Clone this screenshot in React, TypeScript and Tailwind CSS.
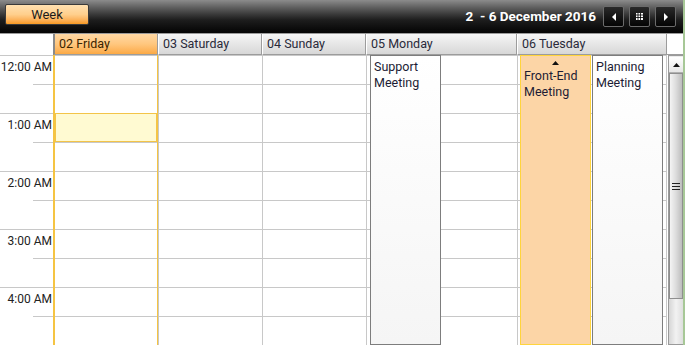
import { clsx } from 'clsx';

const HOURS = ['12:00 AM', '1:00 AM', '2:00 AM', '3:00 AM', '4:00 AM'];
const ROWS = Array.from({ length: 10 }, (_, i) => i);

type Day = { label: string; width: string; today?: boolean };

const DAYS: Day[] = [
  { label: '02 Friday', width: 'w-[105px]', today: true },
  { label: '03 Saturday', width: 'w-[104px]' },
  { label: '04 Sunday', width: 'w-[104px]' },
  { label: '05 Monday', width: 'w-[151px]' },
  { label: '06 Tuesday', width: 'w-[150px]' },
];

function NavButton({ children }: { children: React.ReactNode }) {
  return (
    <button className="w-[21px] h-[21px] flex items-center justify-center rounded-[2px] border border-[#6b6b6b] bg-gradient-to-b from-[#2a2a2a] to-[#050505]">
      {children}
    </button>
  );
}

function Toolbar() {
  return (
    <div className="h-[34px] shrink-0 flex items-center pl-[5px] pr-[7px] bg-gradient-to-b from-[#8c8c8c] via-[#1e1e1e] via-60% to-[#050505] border-b border-[#9a9a9a]">
      <button className="w-[84px] h-[21px] mt-[-4px] border border-[#3a3a3a] rounded-[2px] bg-gradient-to-b from-[#ffe0b0] via-[#ffcf8c] via-50% to-[#f89a20] text-[13px] text-[#1b1b1b] leading-none">
        Week
      </button>
      <div className="flex-1" />
      <span className="text-white font-bold text-[13.5px] mr-[7px] whitespace-pre">
        2  - 6 December 2016
      </span>
      <div className="flex gap-[5px]">
        <NavButton>
          <svg width="6" height="8" viewBox="0 0 6 8">
            <path d="M5 0 L1 4 L5 8 Z" fill="#fff" />
          </svg>
        </NavButton>
        <NavButton>
          <svg width="7" height="7" viewBox="0 0 7 7" fill="#fff">
            <rect x="0" y="0" width="7" height="7" />
            <path d="M2 0 V7 M4.5 0 V7 M0 2 H7 M0 4.5 H7" stroke="#000" strokeWidth="0.8" />
          </svg>
        </NavButton>
        <NavButton>
          <svg width="6" height="8" viewBox="0 0 6 8">
            <path d="M1 0 L5 4 L1 8 Z" fill="#fff" />
          </svg>
        </NavButton>
      </div>
    </div>
  );
}

function HeaderRow() {
  return (
    <div className="h-[21px] shrink-0 flex bg-white">
      <div className="w-[53px] shrink-0" />
      {DAYS.map((d) => (
        <div
          key={d.label}
          className={clsx(
            d.width,
            'shrink-0 flex items-center pl-[4px] pt-[1px] text-[12.5px] border-r border-b border-[#9c9c9c] whitespace-nowrap',
            d.today
              ? 'bg-gradient-to-b from-[#ffd8a4] via-[#ffc77e] to-[#fba943] text-[#3a2400] border-l-2 border-l-[#8a8a8a]'
              : 'bg-gradient-to-b from-[#f6f6f6] to-[#d7d7d7] text-[#2a2a3a] border-l border-l-white'
          )}
        >
          {d.label}
        </div>
      ))}
      <div className="w-[11px] shrink-0 border-b border-[#9c9c9c]" />
      <div className="flex-1 border-b border-[#9c9c9c]" />
    </div>
  );
}

function TimeColumn() {
  return (
    <div className="w-[53px] shrink-0 flex flex-col">
      {ROWS.map((r) => (
        <div key={r} className="h-[29px] shrink-0 relative">
          {r % 2 === 0 ? (
            <>
              <div className="absolute left-0 right-0 top-0 border-t border-[#c8c8c8]" />
              <div className="absolute right-[1px] top-[3px] text-[12px] text-[#222] whitespace-nowrap">
                {HOURS[r / 2]}
              </div>
            </>
          ) : (
            <div className="absolute left-[33px] right-0 top-0 border-t border-[#c8c8c8]" />
          )}
        </div>
      ))}
    </div>
  );
}

function GridRows({ highlight }: { highlight?: number }) {
  return (
    <div className="flex flex-col">
      {ROWS.map((r) => (
        <div
          key={r}
          className={clsx(
            'h-[29px] shrink-0 border-t',
            r === highlight
              ? 'bg-[#fffad2] border border-[#f3c448]'
              : 'border-[#c8c8c8]'
          )}
        />
      ))}
    </div>
  );
}

function Appointment({
  left,
  width,
  title,
  accent,
}: {
  left: string;
  width: string;
  title: string[];
  accent?: boolean;
}) {
  return (
    <div
      className={clsx(
        'absolute top-0 bottom-0 border px-[3px] text-[12.5px] leading-[16px] text-[#1c1c34]',
        left,
        width,
        accent
          ? 'bg-[#fcd5a6] border-[#ffd43c]'
          : 'bg-gradient-to-b from-white to-[#f5f5f5] border-[#7d7d7d]'
      )}
    >
      {accent ? (
        <div className="flex justify-center pt-[5px] pb-[3px]">
          <svg width="7" height="4" viewBox="0 0 7 4">
            <path d="M0 4 L3.5 0 L7 4 Z" fill="#111" />
          </svg>
        </div>
      ) : (
        <div className="h-[3px]" />
      )}
      {title.map((t) => (
        <div key={t}>{t}</div>
      ))}
    </div>
  );
}

function Scrollbar() {
  return (
    <div className="w-[16px] shrink-0 flex flex-col border border-[#9a9a9a] bg-[#ececec] ml-[1px]">
      <div className="h-[16px] shrink-0 flex items-center justify-center bg-gradient-to-b from-white to-[#e6e6e6] border-b border-[#b0b0b0] mt-[1px]">
        <svg width="7" height="4" viewBox="0 0 7 4">
          <path d="M0 4 L3.5 0 L7 4 Z" fill="#111" />
        </svg>
      </div>
      <div className="h-[226px] shrink-0 flex items-center justify-center border border-[#8f8f8f] bg-gradient-to-r from-[#f4f4f4] via-[#dcdcdc] to-[#bdbdbd]">
        <div className="flex flex-col gap-[2px] w-[8px]">
          <div className="h-[1px] bg-[#222]" />
          <div className="h-[1px] bg-[#222]" />
          <div className="h-[1px] bg-[#222]" />
        </div>
      </div>
      <div className="flex-1 bg-gradient-to-r from-[#d6d6d6] via-[#f2f2f2] to-[#dedede]" />
    </div>
  );
}

export default function App() {
  return (
    <div
      className="w-[685px] h-[345px] overflow-hidden bg-white flex flex-col border-r-2 border-[#a7c897]"
      style={{ fontFamily: 'Roboto, "Liberation Sans", sans-serif' }}
    >
      <Toolbar />
      <HeaderRow />
      <div className="flex-1 flex min-h-0">
        <TimeColumn />
        {/* Friday - current day */}
        <div className="w-[105px] shrink-0 border-l-2 border-r border-[#f5c443] relative">
          <GridRows highlight={2} />
        </div>
        <div className="w-[104px] shrink-0 border-l border-[#c8c8c8]">
          <GridRows />
        </div>
        <div className="w-[104px] shrink-0 border-l border-[#c8c8c8]">
          <GridRows />
        </div>
        <div className="w-[151px] shrink-0 border-l border-[#c8c8c8] relative">
          <GridRows />
          <Appointment left="left-[3px]" width="w-[71px]" title={['Support', 'Meeting']} />
        </div>
        <div className="w-[150px] shrink-0 border-l border-r border-[#c8c8c8] relative">
          <GridRows />
          <Appointment left="left-[2px]" width="w-[71px]" title={['Front-End', 'Meeting']} accent />
          <Appointment left="left-[74px]" width="w-[71px]" title={['Planning', 'Meeting']} />
        </div>
        <Scrollbar />
      </div>
    </div>
  );
}
